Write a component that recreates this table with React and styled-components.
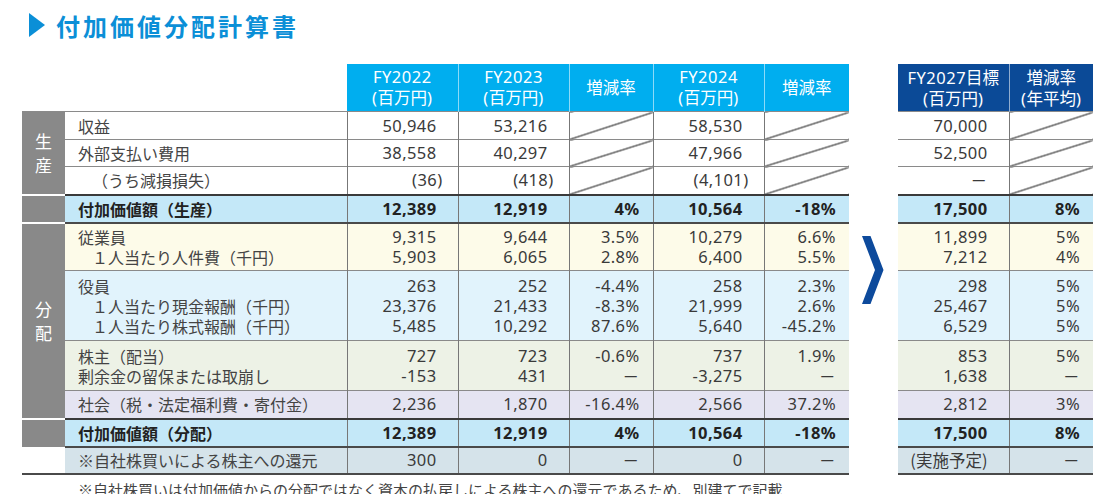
import React from 'react';
import styled, { createGlobalStyle, css } from 'styled-components';

const GlobalStyle = createGlobalStyle`
  body {
    margin: 0;
    background: #fff;
    font-family: "Noto Sans", "Noto Sans CJK JP", sans-serif;
    color: #333;
  }
`;

const JP = `"Noto Sans CJK JP", sans-serif`;

const TONES = {
  white: '#fff',
  total: '#c4e8f8',
  yellow: '#fdfbe9',
  blue: '#e1f3fc',
  green: '#edf2e6',
  purple: '#e5e4f2',
  gray: '#d5e3ea',
};

const Page = styled.div`
  width: 1097px;
  height: 494px;
  overflow: hidden;
`;

const TitleBar = styled.h1`
  margin: 0;
  height: 50px;
  padding-left: 29px;
  display: flex;
  align-items: center;
  gap: 11px;
  font-family: ${JP};
  font-size: 24px;
  font-weight: 700;
  letter-spacing: 3px;
  color: #0b8fd7;
`;

const Triangle = styled.span`
  width: 0;
  height: 0;
  border-left: 16px solid #0b8fd7;
  border-top: 12px solid transparent;
  border-bottom: 12px solid transparent;
`;

const Sheet = styled.table`
  margin: 14px 0 0 22px;
  width: 971px;
  border-collapse: collapse;
  table-layout: fixed;
`;

const Row = styled.tr`
  height: ${p => p.$h}px;
`;

const HeadBlank = styled.th`
  padding: 0;
  border: none;
  background: #fff;
`;

const HeadCell = styled.th`
  height: 47px;
  padding: 0;
  background: ${p => (p.$navy ? '#0b4a97' : '#00aeef')};
  color: #fff;
  font-weight: 400;
  font-size: 16.5px;
  letter-spacing: 0.5px;
  line-height: 20px;
  text-align: center;
  vertical-align: middle;
  border-left: ${p => (p.$first ? 'none' : '1px solid rgba(255,255,255,0.55)')};
`;

const edges = css`
  border-top: ${p => (p.$tone === 'total' ? '2px solid #3a3a3a' : '1px solid #8a8a8a')};
  border-bottom: ${p => (p.$tone === 'total' || p.$last ? '2px solid #4a4a4a' : 'none')};
`;

const Cat = styled.td`
  padding: 0;
  background: ${p => (p.$blank ? '#fff' : '#898989')};
  color: #fff;
  text-align: center;
  vertical-align: middle;
  font-family: ${JP};
  font-size: 17px;
  line-height: 24px;
  border-top: ${p => (p.$top ? '1px solid #8a8a8a' : p.$blank ? 'none' : '2px solid #fff')};
  border-bottom: ${p => (p.$last ? '2px solid #4a4a4a' : 'none')};
`;

const Label = styled.td`
  padding: 0 0 0 13px;
  background: ${p => TONES[p.$tone]};
  font-family: ${JP};
  font-size: 16px;
  line-height: 20px;
  color: ${p => (p.$bold ? '#222' : '#444')};
  font-weight: ${p => (p.$bold ? 700 : 400)};
  white-space: nowrap;
  vertical-align: middle;
  ${edges}
`;

const Line = styled.div`
  height: 20px;
  padding-left: ${p => (p.$indent ? '14px' : '0')};
`;

const diagonal = css`
  background: linear-gradient(
      to bottom right,
      transparent calc(50% - 1px),
      #4a4a4a calc(50% - 0.3px),
      #4a4a4a calc(50% + 0.3px),
      transparent calc(50% + 1px)
    ),
    #fff;
`;

const Value = styled.td`
  padding: 0 ${p => (p.$rate ? '13px' : '21px')} 0 0;
  text-align: right;
  vertical-align: middle;
  font-size: 16.5px;
  letter-spacing: 0.4px;
  line-height: 20px;
  white-space: nowrap;
  color: ${p => (p.$bold ? '#222' : '#3a3a3a')};
  font-weight: ${p => (p.$bold ? 700 : 400)};
  border-left: ${p => (p.$first ? 'none' : '1px solid #777')};
  ${p => (p.$diag ? diagonal : `background: ${TONES[p.$tone]};`)}
  ${edges}
`;

const Stack = styled.div`
  height: 20px;
`;

const Gap = styled.td`
  padding: 124px 0 0 13px;
  vertical-align: top;
  border: none;
  background: #fff;
`;

const Hang = styled.span`
  margin-right: -6px;
`;

const Dash = styled.span`
  font-family: ${JP};
`;

const JpText = styled.span`
  font-family: ${JP};
  letter-spacing: 0;
`;

const Note = styled.p`
  margin: 5px 0 0 78px;
  font-family: ${JP};
  font-size: 15px;
  line-height: 20px;
  color: #444;
  white-space: nowrap;
`;

const D = 'DIAG';
const N = '－';

const Chevron = () => (
  <svg width="22" height="68" viewBox="0 0 22 68">
    <polygon points="0,0 8.5,0 21.5,34 8.5,68 0,68 13,34" fill="#0d4a9c" />
  </svg>
);

const ROWS = [
  { h: 28, tone: 'white', label: ['収益'], v: ['50,946', '53,216', D, '58,530', D, '70,000', D] },
  { h: 27, tone: 'white', label: ['外部支払い費用'], v: ['38,558', '40,297', D, '47,966', D, '52,500', D] },
  { h: 28, tone: 'white', label: [{ t: '（うち減損損失）', indent: true }], v: ['(36)', '(418)', D, '(4,101)', D, N, D] },
  { h: 28, tone: 'total', bold: true, label: ['付加価値額（生産）'], v: ['12,389', '12,919', '4%', '10,564', '-18%', '17,500', '8%'] },
  {
    h: 48, tone: 'yellow',
    label: ['従業員', { t: '１人当たり人件費（千円）', indent: true }],
    v: [['9,315', '5,903'], ['9,644', '6,065'], ['3.5%', '2.8%'], ['10,279', '6,400'], ['6.6%', '5.5%'], ['11,899', '7,212'], ['5%', '4%']],
  },
  {
    h: 70, tone: 'blue',
    label: ['役員', { t: '１人当たり現金報酬（千円）', indent: true }, { t: '１人当たり株式報酬（千円）', indent: true }],
    v: [
      ['263', '23,376', '5,485'], ['252', '21,433', '10,292'], ['-4.4%', '-8.3%', '87.6%'],
      ['258', '21,999', '5,640'], ['2.3%', '2.6%', '-45.2%'], ['298', '25,467', '6,529'], ['5%', '5%', '5%'],
    ],
  },
  {
    h: 50, tone: 'green',
    label: ['株主（配当）', '剰余金の留保または取崩し'],
    v: [['727', '-153'], ['723', '431'], ['-0.6%', N], ['737', '-3,275'], ['1.9%', N], ['853', '1,638'], ['5%', N]],
  },
  { h: 28, tone: 'purple', label: ['社会（税・法定福利費・寄付金）'], v: ['2,236', '1,870', '-16.4%', '2,566', '37.2%', '2,812', '3%'] },
  { h: 28, tone: 'total', bold: true, label: ['付加価値額（分配）'], v: ['12,389', '12,919', '4%', '10,564', '-18%', '17,500', '8%'] },
  { h: 27, tone: 'gray', last: true, label: ['※自社株買いによる株主への還元'], v: ['300', '0', N, '0', N, '(実施予定)', N] },
];

const RATE_COLS = [2, 4, 6];

const renderText = s => {
  if (s === N) return <Dash>{N}</Dash>;
  if (/^\(\d/.test(s)) return <>{s.slice(0, -1)}<Hang>)</Hang></>;
  if (/[^\x00-\x7f]/.test(s)) return <JpText>{s}</JpText>;
  return s;
};

const renderCell = v =>
  Array.isArray(v) ? v.map((s, i) => <Stack key={i}>{renderText(s)}</Stack>) : renderText(v);

const CatCell = ({ index }) => {
  if (index === 0) return <Cat rowSpan={3} $top>生<br />産</Cat>;
  if (index === 3) return <Cat />;
  if (index === 4) return <Cat rowSpan={4}>分<br />配</Cat>;
  if (index === 8) return <Cat />;
  if (index === 9) return <Cat $blank $last />;
  return null;
};

export default function App() {
  return (
    <Page>
      <GlobalStyle />
      <TitleBar>
        <Triangle />
        付加価値分配計算書
      </TitleBar>
      <Sheet>
        <colgroup>
          <col style={{ width: 43 }} />
          <col style={{ width: 282 }} />
          <col style={{ width: 111 }} />
          <col style={{ width: 111 }} />
          <col style={{ width: 84 }} />
          <col style={{ width: 111 }} />
          <col style={{ width: 85 }} />
          <col style={{ width: 49 }} />
          <col style={{ width: 111 }} />
          <col style={{ width: 84 }} />
        </colgroup>
        <thead>
          <tr>
            <HeadBlank />
            <HeadBlank />
            <HeadCell $first>FY2022<br />(<JpText>百万円</JpText>)</HeadCell>
            <HeadCell>FY2023<br />(<JpText>百万円</JpText>)</HeadCell>
            <HeadCell><JpText>増減率</JpText></HeadCell>
            <HeadCell>FY2024<br />(<JpText>百万円</JpText>)</HeadCell>
            <HeadCell><JpText>増減率</JpText></HeadCell>
            <HeadBlank />
            <HeadCell $navy $first>FY2027<JpText>目標</JpText><br />(<JpText>百万円</JpText>)</HeadCell>
            <HeadCell $navy><JpText>増減率</JpText><br />(<JpText>年平均</JpText>)</HeadCell>
          </tr>
        </thead>
        <tbody>
          {ROWS.map((r, i) => {
            const common = { $tone: r.tone, $bold: r.bold, $last: r.last };
            const cells = r.v.map((v, j) => (
              <Value
                key={j}
                {...common}
                $rate={RATE_COLS.includes(j)}
                $diag={v === D}
                $first={j === 5}
              >
                {v === D ? null : renderCell(v)}
              </Value>
            ));
            return (
              <Row key={i} $h={r.h}>
                <CatCell index={i} />
                <Label {...common}>
                  {r.label.map((l, k) =>
                    typeof l === 'string' ? <Line key={k}>{l}</Line> : <Line key={k} $indent>{l.t}</Line>
                  )}
                </Label>
                {cells.slice(0, 5)}
                {i === 0 && (
                  <Gap rowSpan={ROWS.length}>
                    <Chevron />
                  </Gap>
                )}
                {cells.slice(5)}
              </Row>
            );
          })}
        </tbody>
      </Sheet>
      <Note>※自社株買いは付加価値からの分配ではなく資本の払戻しによる株主への還元であるため、別建てで記載</Note>
    </Page>
  );
}
